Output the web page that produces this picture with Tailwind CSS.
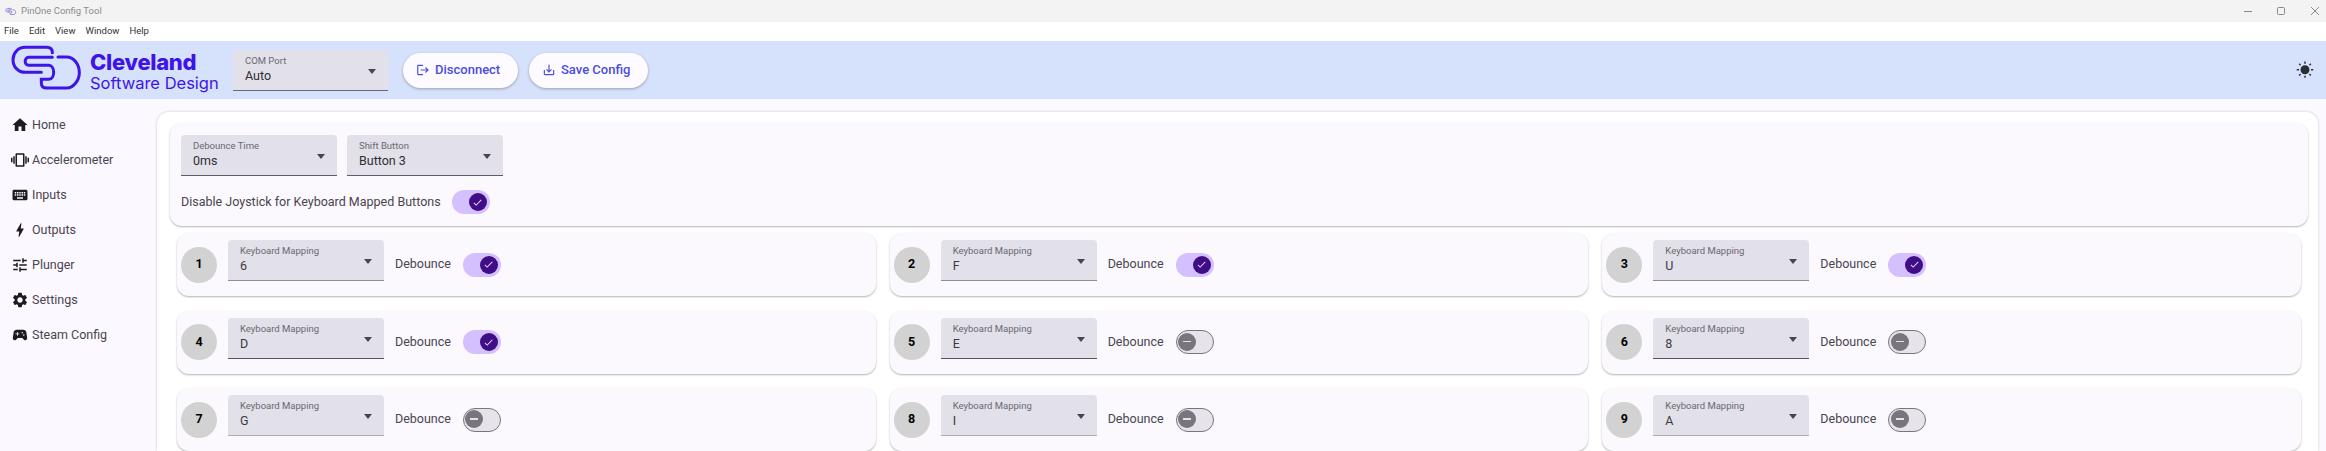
<!DOCTYPE html>
<html lang="en">
<head>
    <meta charset="utf-8">
    <title>PinOne Config Tool</title>
    <script src="https://cdn.jsdelivr.net/npm/@tailwindcss/browser@4"></script>
</head>
<body class="bg-[#fcf8ff] font-[Roboto,sans-serif] text-[#49454f] h-[451px] overflow-hidden">

    <!-- Window title bar -->
    <div class="h-[22px] bg-[#f3f3f3] flex items-center pl-[5px] text-[9.5px] text-[#8b8b8b]">
        <svg class="w-[12px] h-[9px] mr-[4px]" viewBox="0 0 240 156" fill="none" stroke="#8f7fd8" stroke-width="18">
            <path d="M133 32Q133 16 116 16H52C30 16 15 33 15 53C15 74 30 91 52 91H100"/>
            <path d="M133 46H62C48 46 48 70 62 70H122C142 70 142 112 122 112H100V122Q100 138 116 138H176C196 138 214 115 214 92C214 65 196 45 176 45H150"/>
        </svg>
        <span>PinOne Config Tool</span>
        <div class="ml-auto flex items-center text-[#8a8a8a]">
            <svg class="w-[10px] h-[10px] mr-[23px]" viewBox="0 0 10 10" stroke="currentColor"><path d="M1 5.5H9"/></svg>
            <svg class="w-[10px] h-[10px] mr-[24px]" viewBox="0 0 10 10" fill="none" stroke="currentColor"><rect x="1.5" y="1.5" width="7" height="7" rx="1"/></svg>
            <svg class="w-[10px] h-[10px] mr-[6px]" viewBox="0 0 10 10" stroke="currentColor"><path d="M1 1L9 9M9 1L1 9"/></svg>
        </div>
    </div>

    <!-- Menu bar -->
    <div class="h-[19px] bg-white flex items-center gap-[10px] pl-[4px] text-[9.5px] text-[#333]">
        <span>File</span><span>Edit</span><span>View</span><span>Window</span><span>Help</span>
    </div>

    <!-- App bar -->
    <header class="h-[58px] bg-[#d6e2fb] flex items-center pl-[8px]">
        <svg class="w-[80px] h-[52px] shrink-0 -mt-[4px]" viewBox="0 0 240 156" fill="none" stroke="#3f14e8" stroke-width="9" stroke-linecap="round">
            <path d="M133 32Q133 16 116 16H52C30 16 15 33 15 53C15 74 30 91 52 91H100"/>
            <path d="M133 46H62C48 46 48 70 62 70H122C142 70 142 112 122 112H100V122Q100 138 116 138H176C196 138 214 115 214 92C214 65 196 45 176 45H150"/>
        </svg>
        <div class="ml-[2px] w-[143px] pt-[4px] text-[#3f14e8] font-[Inter,sans-serif] shrink-0">
            <div class="text-[22px] leading-[22px] font-extrabold tracking-[-0.3px]">Cleveland</div>
            <div class="text-[16.5px] leading-[20px]">Software Design</div>
        </div>
        <div class="relative w-[155px] h-[41px] bg-[#e2e0e8] rounded-t-[4px] border-b border-[#6b6873]">
            <span class="absolute left-[12px] top-[5px] text-[9.5px] leading-[12px] text-[#6b6873]">COM Port</span>
            <span class="absolute left-[12px] top-[18px] text-[12.5px] leading-[16px] text-[#2f2d35]">Auto</span>
            <span class="absolute right-[12px] top-[19px] w-0 h-0 border-x-[4px] border-x-transparent border-t-[5px] border-t-[#49454f]"></span>
        </div>
        <button class="ml-[15px] w-[115px] h-[35px] rounded-full bg-[#fdfbff] shadow-[0_1px_3px_rgba(0,0,0,0.3)] flex items-center pl-[13px] gap-[5px] text-[13px] font-medium text-[#4a4de0]">
            <svg class="w-[14px] h-[14px]" viewBox="0 0 24 24" fill="currentColor"><path d="M17 7l-1.41 1.41L18.17 11H8v2h10.17l-2.58 2.58L17 17l5-5zM4 5h8V3H4c-1.1 0-2 .9-2 2v14c0 1.1.9 2 2 2h8v-2H4V5z"/></svg>
            Disconnect
        </button>
        <button class="ml-[11px] w-[119px] h-[35px] rounded-full bg-[#fdfbff] shadow-[0_1px_3px_rgba(0,0,0,0.3)] flex items-center pl-[13px] gap-[5px] text-[13px] font-medium text-[#4a4de0]">
            <svg class="w-[14px] h-[14px]" viewBox="0 0 24 24" fill="currentColor"><path d="M19 12v7H5v-7H3v7c0 1.1.9 2 2 2h14c1.1 0 2-.9 2-2v-7h-2zm-6 .67l2.59-2.58L17 11.5l-5 5-5-5 1.41-1.41L11 12.67V3h2z"/></svg>
            Save Config
        </button>
        <svg class="ml-auto mr-[12px] w-[18px] h-[18px] text-[#2c2c34]" viewBox="0 0 24 24" fill="currentColor"><path d="M6.76 4.84l-1.8-1.79-1.41 1.41 1.79 1.79 1.42-1.41zM4 10.5H1v2h3v-2zm9-9.95h-2V3.5h2V.55zm7.45 3.91l-1.41-1.41-1.79 1.79 1.41 1.41 1.79-1.79zm-3.21 13.7l1.79 1.8 1.41-1.41-1.8-1.79-1.4 1.4zM20 10.5v2h3v-2h-3zm-8-5c-3.31 0-6 2.69-6 6s2.69 6 6 6 6-2.69 6-6-2.69-6-6-6zm-1 16.95h2V19.5h-2v2.95zm-7.45-3.91l1.41 1.41 1.79-1.8-1.41-1.41-1.79 1.8z"/></svg>
    </header>

    <div class="flex">
        <!-- Sidebar -->
        <nav class="w-[157px] shrink-0 pt-[16px] pl-[11px] flex flex-col gap-[15px] text-[12.5px] leading-[20px]">
            <a class="flex items-center gap-[3px]"><svg class="w-[18px] h-[18px] text-[#1d1b20]" viewBox="0 0 24 24" fill="currentColor"><path d="M10 20v-6h4v6h5v-8h3L12 3 2 12h3v8z"/></svg>Home</a>
            <a class="flex items-center gap-[3px]"><svg class="w-[18px] h-[18px] text-[#1d1b20]" viewBox="0 0 24 24" fill="currentColor"><path d="M0 15h2V9H0v6zm3 2h2V7H3v10zm19-8v6h2V9h-2zm-3 8h2V7h-2v10zM16.5 3h-9C6.67 3 6 3.67 6 4.5v15c0 .83.67 1.5 1.5 1.5h9c.83 0 1.5-.67 1.5-1.5v-15c0-.83-.67-1.5-1.5-1.5zM16 19H8V5h8v14z"/></svg>Accelerometer</a>
            <a class="flex items-center gap-[3px]"><svg class="w-[18px] h-[18px] text-[#1d1b20]" viewBox="0 0 24 24" fill="currentColor"><path d="M20 5H4c-1.1 0-1.99.9-1.99 2L2 17c0 1.1.9 2 2 2h16c1.1 0 2-.9 2-2V7c0-1.1-.9-2-2-2zm-9 3h2v2h-2V8zm0 3h2v2h-2v-2zM8 8h2v2H8V8zm0 3h2v2H8v-2zm-1 2H5v-2h2v2zm0-3H5V8h2v2zm9 7H8v-2h8v2zm0-4h-2v-2h2v2zm0-3h-2V8h2v2zm3 3h-2v-2h2v2zm0-3h-2V8h2v2z"/></svg>Inputs</a>
            <a class="flex items-center gap-[3px]"><svg class="w-[18px] h-[18px] text-[#1d1b20]" viewBox="0 0 24 24" fill="currentColor"><path d="M11 21h-1l1-7H7.5c-.58 0-.57-.32-.38-.66.19-.34.05-.08.07-.12C8.48 10.94 10.42 7.54 13 3h1l-1 7h3.5c.49 0 .56.33.47.51l-.07.15C12.96 17.55 11 21 11 21z"/></svg>Outputs</a>
            <a class="flex items-center gap-[3px]"><svg class="w-[18px] h-[18px] text-[#1d1b20]" viewBox="0 0 24 24" fill="currentColor"><path d="M3 17v2h6v-2H3zM3 5v2h10V5H3zm10 16v-2h8v-2h-8v-2h-2v6h2zM7 9v2H3v2h4v2h2V9H7zm14 4v-2H11v2h10zm-6-4h2V7h4V5h-4V3h-2v6z"/></svg>Plunger</a>
            <a class="flex items-center gap-[3px]"><svg class="w-[18px] h-[18px] text-[#1d1b20]" viewBox="0 0 24 24" fill="currentColor"><path d="M19.14 12.94c.04-.3.06-.61.06-.94 0-.32-.02-.64-.07-.94l2.03-1.58c.18-.14.23-.41.12-.61l-1.92-3.32c-.12-.22-.37-.29-.59-.22l-2.39.96c-.5-.38-1.03-.7-1.62-.94l-.36-2.54c-.04-.24-.24-.41-.48-.41h-3.84c-.24 0-.43.17-.47.41l-.36 2.54c-.59.24-1.13.57-1.62.94l-2.39-.96c-.22-.08-.47 0-.59.22L2.74 8.87c-.12.21-.08.47.12.61l2.03 1.58c-.05.3-.09.63-.09.94s.02.64.07.94l-2.03 1.58c-.18.14-.23.41-.12.61l1.92 3.32c.12.22.37.29.59.22l2.39-.96c.5.38 1.03.7 1.62.94l.36 2.54c.05.24.24.41.48.41h3.84c.24 0 .44-.17.47-.41l.36-2.54c.59-.24 1.13-.56 1.62-.94l2.39.96c.22.08.47 0 .59-.22l1.92-3.32c.12-.22.07-.47-.12-.61l-2.01-1.58zM12 15.6c-1.98 0-3.6-1.62-3.6-3.6s1.62-3.6 3.6-3.6 3.6 1.62 3.6 3.6-1.62 3.6-3.6 3.6z"/></svg>Settings</a>
            <a class="flex items-center gap-[3px]"><svg class="w-[18px] h-[18px] text-[#1d1b20]" viewBox="0 0 24 24" fill="currentColor"><path d="M21.58 16.09l-1.09-7.66C20.21 6.46 18.52 5 16.53 5H7.47C5.48 5 3.79 6.46 3.51 8.43l-1.09 7.66C2.2 17.63 3.39 19 4.94 19c.68 0 1.32-.27 1.8-.75L9 16h6l2.25 2.25c.48.48 1.13.75 1.8.75 1.56 0 2.75-1.37 2.53-2.91zM11 11H9v2H8v-2H6v-1h2V8h1v2h2v1zm4-1c-.55 0-1-.45-1-1s.45-1 1-1 1 .45 1 1-.45 1-1 1zm2 3c-.55 0-1-.45-1-1s.45-1 1-1 1 .45 1 1-.45 1-1 1z"/></svg>Steam Config</a>
        </nav>

        <!-- Content -->
        <main class="w-[2161px] h-[339px] overflow-hidden mt-[13px] rounded-t-[12px] bg-white shadow-[0_0_3px_rgba(0,0,0,0.2)] pl-[13px] pr-[10px] pt-[11px]">

            <!-- Global options -->
            <section class="h-[103px] rounded-[12px] bg-[#fbf8fe] shadow-[0_1px_2px_rgba(0,0,0,0.3)] px-[11px] pt-[12px]">
                <div class="flex gap-[10px]">
                    <div class="relative w-[156px] h-[41px] bg-[#e2e0e8] rounded-t-[4px] border-b border-[#5f5c67]">
                        <span class="absolute left-[12px] top-[5px] text-[9.5px] leading-[12px] text-[#6b6873]">Debounce Time</span>
                        <span class="absolute left-[12px] top-[18px] text-[12.5px] leading-[16px] text-[#2f2d35]">0ms</span>
                        <span class="absolute right-[12px] top-[19px] w-0 h-0 border-x-[4px] border-x-transparent border-t-[5px] border-t-[#49454f]"></span>
                    </div>
                    <div class="relative w-[156px] h-[41px] bg-[#e2e0e8] rounded-t-[4px] border-b border-[#5f5c67]">
                        <span class="absolute left-[12px] top-[5px] text-[9.5px] leading-[12px] text-[#6b6873]">Shift Button</span>
                        <span class="absolute left-[12px] top-[18px] text-[12.5px] leading-[16px] text-[#2f2d35]">Button 3</span>
                        <span class="absolute right-[12px] top-[19px] w-0 h-0 border-x-[4px] border-x-transparent border-t-[5px] border-t-[#49454f]"></span>
                    </div>
                </div>
                <div class="flex items-center mt-[14px] gap-[11px] text-[12.5px]">
                    <span>Disable Joystick for Keyboard Mapped Buttons</span>
                    <span class="relative w-[38px] h-[24px] rounded-full bg-[#d4bfff]">
                        <span class="absolute right-[3px] top-[3px] w-[18px] h-[18px] rounded-full bg-[#3f0d86] flex items-center justify-center">
                            <svg class="w-[11px] h-[11px] text-[#e8def8]" viewBox="0 0 24 24" fill="currentColor"><path d="M9 16.17 4.83 12l-1.42 1.41L9 19 21 7l-1.41-1.41z"/></svg>
                        </span>
                    </span>
                </div>
            </section>

            <!-- Button mappings -->
            <div class="grid grid-cols-3 gap-x-[14px] gap-y-[14.5px] mx-[7px] mt-[7px]" id="button-grid"></div>
        </main>
    </div>

    <script>
        // key, debounce on, underline colour
        const buttons = [
            ['6', true, 'border-[#8e8c96]'], ['F', true, 'border-[#8e8c96]'], ['U', true, 'border-[#8e8c96]'],
            ['D', true, 'border-[#55525c]'], ['E', false, 'border-[#55525c]'], ['8', false, 'border-[#55525c]'],
            ['G', false, 'border-[#aeabb5]'], ['I', false, 'border-[#aeabb5]'], ['A', false, 'border-[#aeabb5]']
        ]
        const toggleOn = `<span class="relative w-[38px] h-[24px] rounded-full bg-[#d4bfff]"><span class="absolute right-[3px] top-[3px] w-[18px] h-[18px] rounded-full bg-[#3f0d86] flex items-center justify-center"><svg class="w-[11px] h-[11px] text-[#e8def8]" viewBox="0 0 24 24" fill="currentColor"><path d="M9 16.17 4.83 12l-1.42 1.41L9 19 21 7l-1.41-1.41z"/></svg></span></span>`
        const toggleOff = `<span class="relative w-[38px] h-[24px] rounded-full bg-[#e6e4ea] border-[1.5px] border-[#79747e]"><span class="absolute left-[1.5px] top-[1.5px] w-[18px] h-[18px] rounded-full bg-[#79747e] flex items-center justify-center"><span class="w-[8px] h-[1.5px] bg-[#e6e0e9]"></span></span></span>`

        document.getElementById('button-grid').innerHTML = buttons.map(([key, on, line], i) => `
            <div class="h-[63px] rounded-[12px] bg-[#fbf8fe] shadow-[0_1px_2px_rgba(0,0,0,0.3)] flex items-center px-[4px]">
                <span class="w-[36px] h-[36px] rounded-full bg-[#d2d2d2] flex items-center justify-center text-[12.5px] font-bold text-black">${i + 1}</span>
                <div class="relative w-[156px] h-[41px] ml-[11px] -mt-[8px] bg-[#e2e0e8] rounded-t-[4px] border-b ${line}">
                    <span class="absolute left-[12px] top-[5px] text-[9.5px] leading-[12px] text-[#6b6873]">Keyboard Mapping</span>
                    <span class="absolute left-[12px] top-[18px] text-[12.5px] leading-[16px] text-[#3b3941]">${key}</span>
                    <span class="absolute right-[12px] top-[19px] w-0 h-0 border-x-[4px] border-x-transparent border-t-[5px] border-t-[#49454f]"></span>
                </div>
                <span class="ml-[11px] mr-[12px] text-[12.5px]">Debounce</span>
                ${on ? toggleOn : toggleOff}
            </div>`).join('')
    </script>
</body>
</html>
